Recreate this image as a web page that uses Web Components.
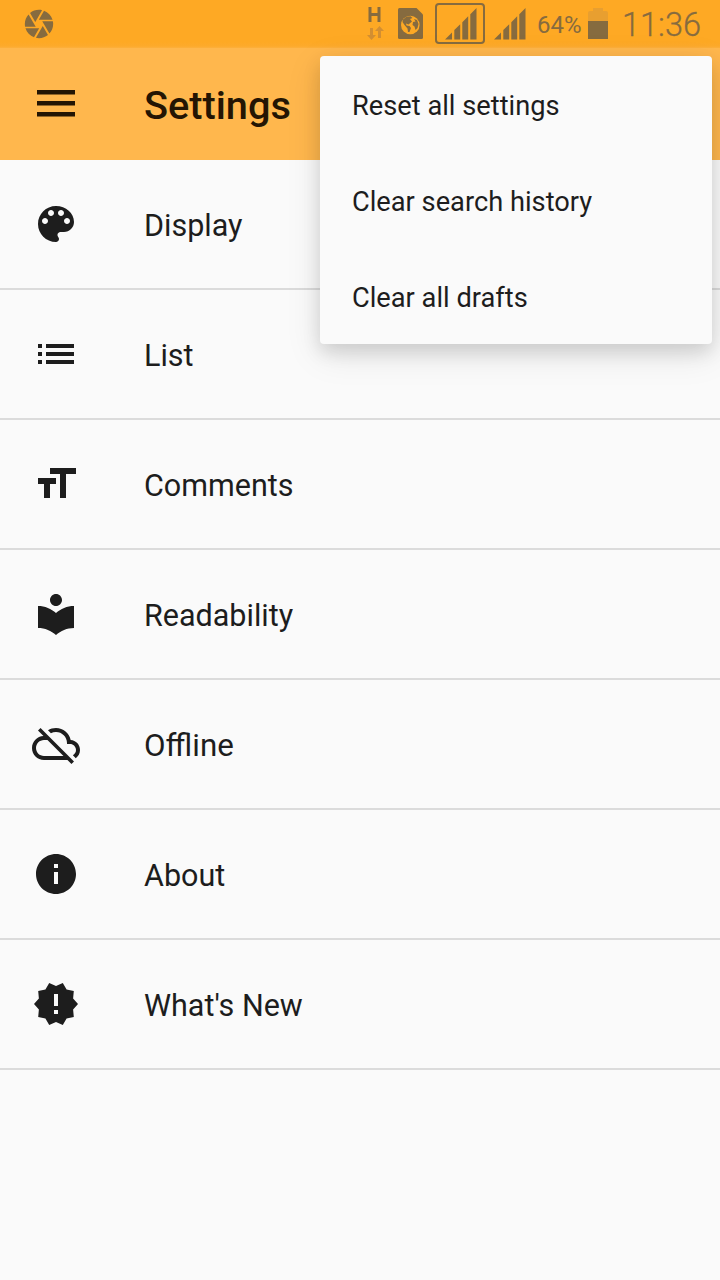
<!DOCTYPE html>
<html lang="en">
<head>
<meta charset="utf-8">
<title>Settings</title>
<style>
html,body{margin:0;height:100%;overflow:hidden;background:#fafafa}
body{font-family:Roboto,"Liberation Sans",sans-serif}
</style>
</head>
<body>
<settings-screen></settings-screen>
<script>
const define = (name, html, setup) => {
  const t = document.createElement('template');
  t.innerHTML = html;
  customElements.define(name, class extends HTMLElement {
    constructor() {
      super();
      this.attachShadow({mode: 'open'}).append(t.content.cloneNode(true));
    }
    connectedCallback() { if (setup) setup(this, this.shadowRoot); }
  });
};

const ICONS = {
  palette: 'M12 3c-4.97 0-9 4.03-9 9s4.03 9 9 9c.83 0 1.5-.67 1.5-1.5 0-.39-.15-.74-.39-1.01-.23-.26-.38-.61-.38-.99 0-.83.67-1.5 1.5-1.5H16c2.76 0 5-2.24 5-5 0-4.42-4.03-8-9-8zm-5.5 9c-.83 0-1.5-.67-1.5-1.5S5.67 9 6.5 9 8 9.67 8 10.5 7.33 12 6.5 12zm3-4C8.67 8 8 7.33 8 6.5S8.67 5 9.5 5s1.5.67 1.5 1.5S10.33 8 9.5 8zm5 0c-.83 0-1.5-.67-1.5-1.5S13.67 5 14.5 5s1.5.67 1.5 1.5S15.33 8 14.5 8zm3 4c-.83 0-1.5-.67-1.5-1.5S16.67 9 17.5 9s1.5.67 1.5 1.5-.67 1.5-1.5 1.5z',
  list: 'M3 13h2v-2H3v2zm0 4h2v-2H3v2zm0-8h2V7H3v2zm4 4h14v-2H7v2zm0 4h14v-2H7v2zM7 7v2h14V7H7z',
  size: 'M9 4v3h5v12h3V7h5V4H9zm-6 8h3v7h3v-7h3V9H3v3z',
  library: 'M12 11.55C9.64 9.35 6.48 8 3 8v11c3.48 0 6.64 1.35 9 3.55 2.36-2.19 5.52-3.55 9-3.55V8c-3.48 0-6.64 1.35-9 3.55zM12 8c1.66 0 3-1.34 3-3s-1.34-3-3-3-3 1.34-3 3 1.34 3 3 3z',
  cloudoff: 'M19.35 10.04C18.67 6.59 15.64 4 12 4c-1.48 0-2.85.43-4.01 1.17l1.46 1.46C10.21 6.23 11.08 6 12 6c3.04 0 5.5 2.46 5.5 5.5v.5H19c1.66 0 3 1.34 3 3 0 1.13-.64 2.11-1.56 2.62l1.45 1.45C23.16 18.16 24 16.68 24 15c0-2.64-2.05-4.78-4.65-4.96zM3 5.27l2.75 2.74C2.56 8.15 0 10.77 0 14c0 3.31 2.69 6 6 6h11.73l2 2L21 20.73 4.27 4 3 5.27zM7.73 10l8 8H6c-2.21 0-4-1.79-4-4s1.79-4 4-4h1.73z',
  info: 'M12 2C6.48 2 2 6.48 2 12s4.48 10 10 10 10-4.48 10-10S17.52 2 12 2zm1 15h-2v-6h2v6zm0-8h-2V7h2v2z',
  release: 'M23 12l-2.44-2.78.34-3.68-3.61-.82-1.89-3.18L12 3 8.6 1.54 6.71 4.72l-3.61.81.34 3.68L1 12l2.44 2.78-.34 3.69 3.61.82 1.89 3.18L12 21l3.4 1.46 1.89-3.18 3.61-.82-.34-3.68L23 12zm-10 5h-2v-2h2v2zm0-4h-2V7h2v6z',
  aperture: 'M9.4 10.5l4.77-8.26C13.47 2.09 12.75 2 12 2c-2.4 0-4.6.85-6.32 2.25l3.66 6.35.06-.1zM21.54 9c-.92-2.92-3.15-5.26-6-6.34L11.88 9h9.66zm.26 1h-7.49l.29.5 4.76 8.25C21 16.97 22 14.61 22 12c0-.69-.07-1.35-.2-2zM8.54 12l-3.9-6.75C3.01 7.03 2 9.39 2 12c0 .69.07 1.35.2 2h7.49l-1.15-2zm-6.08 3c.92 2.92 3.15 5.26 6 6.34L12.12 15H2.46zm11.27 0l-3.9 6.76c.7.15 1.42.24 2.17.24 2.4 0 4.6-.85 6.32-2.25l-3.66-6.35-.93 1.6z'
};

define('ui-icon', `<style>:host{display:block;width:48px;height:48px;flex:none}svg{display:block;width:100%;height:100%}</style>
<svg viewBox="0 0 24 24" fill="currentColor"><path/></svg>`,
  (el, root) => root.querySelector('path').setAttribute('d', ICONS[el.getAttribute('name')]));

define('signal-bars', `<style>:host{display:block;width:32px;height:32px;flex:none}svg{display:block}</style>
<svg width="32" height="32" viewBox="0 0 32 32" fill="currentColor"><path d="M0 31.500L7 24.500V31.500zM9.300 22L15.200 16.200V31.500H9.300zM17.300 14.200L23.200 8.300V31.500H17.300zM25.300 6.200L31.500 0V31.500H25.300z"/></svg>`);

define('status-bar', `<style>
:host{display:flex;box-sizing:border-box;height:48px;background:linear-gradient(#fea924 0,#fea924 42px,#fdaa2b 46px,#fdb03c 48px);color:#866b3f;padding:0 0 0 22px;align-items:flex-start;line-height:28px}
:host>*,span,.sim{flex:none}
.cam{width:34px;height:34px;margin-top:7px}
svg{display:block;flex:none}
.h{margin:6px 0 0 310px}
.globe{margin:8px 0 0 14px}
.sim{box-sizing:border-box;width:50px;height:41px;margin:3px 0 0 11px;border:2px solid;border-radius:4px;padding:3px 0 0 8px}
.s2{margin:8px 0 0 9px}
.pct{margin:11px 0 0 11px;width:44px;font-size:24px;white-space:nowrap}
.bat{margin:8px 0 0 7px}
.time{margin:10px 0 0 14px;font-size:32.500px;font-weight:300;line-height:30px;white-space:nowrap;-webkit-text-stroke:.3px}
</style>
<ui-icon class="cam" name="aperture"></ui-icon>
<svg class="h" width="18" height="34" viewBox="0 0 18 34"><path d="M4 1V16M13 1V16M4 8.500H13" stroke="currentColor" stroke-width="3" fill="none"/><path d="M4 22h3v7h3l-4.500 5L1 29h3zM12 32h3v-7h3l-4.500-5L9 25h3z" fill="#d38f32"/></svg>
<svg class="globe" width="26" height="31" viewBox="0 0 26 31"><path d="M1.500 0H18.500L25 6.500V29.500Q25 31 23.500 31H1.500Q0 31 0 29.500V1.500Q0 0 1.500 0z" fill="currentColor"/><circle cx="12.300" cy="17" r="9.300" fill="#fea924"/><path d="M5 11.500L8.500 8.800L12.500 8.300L14.500 10L12 11L14 13.500L10.500 16.500L8 15.500L8.500 17.500L11.500 18L13 20L11.500 24L10 24L9.500 20.500L6.500 17L4.500 14zM16 11L19 12L20.500 16L19.500 20L17.500 22L16.500 18.500L14.500 17L15 14L17.500 13.500z" fill="currentColor"/></svg>
<div class="sim"><signal-bars></signal-bars></div>
<signal-bars class="s2"></signal-bars>
<span class="pct">64%</span>
<svg class="bat" width="20" height="32" viewBox="0 0 20 32"><path d="M0 5Q0 3 2 3H5V0H15V3H18Q20 3 20 5V13H0z" fill="#e89f30"/><path d="M0 13H20V31H0z" fill="currentColor"/></svg>
<span class="time">11:36</span>`);

define('app-bar', `<style>
:host{display:flex;box-sizing:border-box;height:112px;background:#ffb74d;color:#241503;align-items:center;padding:4px 37px 0}
svg{display:block;margin:-5px 69px 0 0;flex:none}
h1{margin:0;font-size:39.700px;font-weight:500;line-height:48px}
</style>
<svg width="38" height="27" viewBox="0 0 38 27" fill="currentColor"><path d="M0 0H38V4.500H0zM0 11H38V15.500H0zM0 22H38V26.500H0z"/></svg>
<h1><slot></slot></h1>`);

define('settings-item', `<style>
:host{display:flex;box-sizing:border-box;height:130px;border-bottom:2px solid #dbdbdb;align-items:center;padding:0 32px;gap:64px;color:#1d1d1d;font-size:31px;line-height:40px}
span{padding-top:3px;transform:scaleX(.984);transform-origin:left}
:host([icon=cloudoff]) span{transform:scaleX(1.010)}
</style>
<ui-icon></ui-icon><span><slot></slot></span>`,
  (el, root) => {
    const i = root.querySelector('ui-icon');
    i.shadowRoot.querySelector('path').setAttribute('d', ICONS[el.getAttribute('icon')]);
    i.setAttribute('name', el.getAttribute('icon'));
  });

define('menu-item', `<style>:host{display:flex;height:96px;align-items:center;padding:3px 32px 0;box-sizing:border-box;font-size:28px;line-height:36px;color:#1d1d1d}span{transform:scaleX(.973);transform-origin:left}</style><span><slot></slot></span>`);

define('popup-menu', `<style>
:host{display:block;position:absolute;top:56px;right:8px;width:392px;background:#fafafa;border-radius:4px;box-shadow:0 8px 18px rgba(0,0,0,.12),0 10px 36px rgba(0,0,0,.10)}
</style><slot></slot>`);

define('settings-screen', `<style>
:host{display:block;position:relative;width:720px;height:1280px;overflow:hidden;background:#fafafa}
</style>
<status-bar></status-bar>
<app-bar>Settings</app-bar>
<main>
<settings-item icon="palette">Display</settings-item>
<settings-item icon="list">List</settings-item>
<settings-item icon="size">Comments</settings-item>
<settings-item icon="library">Readability</settings-item>
<settings-item icon="cloudoff">Offline</settings-item>
<settings-item icon="info">About</settings-item>
<settings-item icon="release">What's New</settings-item>
</main>
<popup-menu>
<menu-item>Reset all settings</menu-item>
<menu-item>Clear search history</menu-item>
<menu-item>Clear all drafts</menu-item>
</popup-menu>`);
</script>
</body>
</html>
